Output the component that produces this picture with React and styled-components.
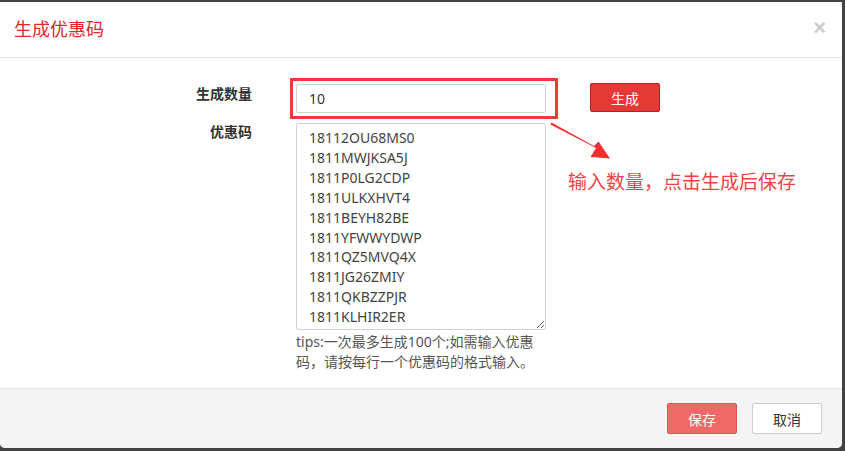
import React from "react";
import styled, { createGlobalStyle } from "styled-components";

const GlobalStyle = createGlobalStyle`
  html, body {
    margin: 0;
    padding: 0;
    background: #424242;
  }
  body {
    font-family: "Noto Sans", "Noto Sans CJK SC", sans-serif;
  }
  * { box-sizing: border-box; }
`;

const Modal = styled.div`
  margin-top: 2px;
  width: 842px;
  height: 446px;
  background: #fff;
  border-radius: 0 0 5px 5px;
  overflow: hidden;
  display: flex;
  flex-direction: column;
`;

const Header = styled.div`
  height: 56px;
  border-bottom: 1px solid #e5e5e5;
  display: flex;
  align-items: center;
  justify-content: space-between;
  padding: 0 14px 0 14px;
  flex-shrink: 0;
`;

const Title = styled.h4`
  margin: 0;
  font-size: 18px;
  font-weight: 400;
  color: #e8262b;
  line-height: 24px;
  padding-bottom: 1px;
`;

const Close = styled.button`
  border: 0;
  background: transparent;
  padding: 0;
  font-family: "Liberation Sans", sans-serif;
  font-size: 22px;
  font-weight: 700;
  line-height: 1;
  color: #000;
  opacity: 0.2;
  margin-right: 2px;
  margin-bottom: 3px;
  cursor: pointer;
`;

const Body = styled.div`
  position: relative;
  height: 330px;
  padding-top: 26px;
  flex-shrink: 0;
`;

const Form = styled.div`
  display: grid;
  grid-template-columns: 252px 250px auto;
  column-gap: 44px;
  row-gap: 10px;
  align-items: start;
`;

const Label = styled.label`
  text-align: right;
  font-size: 14px;
  font-weight: 700;
  color: #333;
  line-height: 20px;
  margin-top: ${(p) => p.$offset || 0}px;
`;

const Input = styled.input`
  width: 250px;
  height: 29px;
  border: 1px solid #d2d2d2;
  border-radius: 2px;
  padding: 0 12px;
  font-family: inherit;
  font-size: 14px;
  color: #333;
  outline: none;
`;

const GenerateButton = styled.button`
  width: 70px;
  height: 29px;
  margin-top: -1px;
  background: #e53935;
  border: 1px solid #b3201f;
  border-radius: 2px;
  color: #fff;
  font-family: inherit;
  font-size: 14px;
  padding: 0;
  justify-self: start;
`;

const Field = styled.div`
  display: flex;
  flex-direction: column;
`;

const CodeArea = styled.textarea`
  width: 250px;
  height: 207px;
  border: 1px solid #d2d2d2;
  border-radius: 2px;
  padding: 4px 12px 0;
  font-family: inherit;
  font-size: 14px;
  line-height: 19.9px;
  color: #444;
  overflow: hidden;
  outline: none;
  resize: vertical;
`;

const Tips = styled.p`
  margin: 2px 0 0;
  width: 250px;
  font-size: 14px;
  line-height: 20px;
  color: #555;
`;

/* red outline drawn around the quantity field */
const Highlight = styled.div`
  position: absolute;
  left: 290px;
  top: 20px;
  width: 268px;
  height: 41px;
  border: 3px solid #f03a3a;
  pointer-events: none;
`;

const Pointer = styled.svg`
  position: absolute;
  left: 545px;
  top: 60px;
  pointer-events: none;
`;

const Note = styled.div`
  position: absolute;
  left: 568px;
  top: 112px;
  font-size: 19px;
  line-height: 24px;
  color: #f04444;
  white-space: nowrap;
`;

const Footer = styled.div`
  flex: 1;
  border-top: 1px solid #e5e5e5;
  background: #f4f4f4;
  display: flex;
  justify-content: flex-end;
  align-items: center;
  gap: 15px;
  padding: 0 20px 0 0;
`;

const FooterButton = styled.button`
  width: 70px;
  height: 31px;
  border-radius: 2px;
  font-family: inherit;
  font-size: 14px;
  padding: 0;
  border: 1px solid ${(p) => (p.$primary ? "#e4524e" : "#cccccc")};
  background: ${(p) => (p.$primary ? "#ef6a66" : "#ffffff")};
  color: ${(p) => (p.$primary ? "#ffffff" : "#333333")};
`;

const codes = [
  "18112OU68MS0",
  "1811MWJKSA5J",
  "1811P0LG2CDP",
  "1811ULKXHVT4",
  "1811BEYH82BE",
  "1811YFWWYDWP",
  "1811QZ5MVQ4X",
  "1811JG26ZMIY",
  "1811QKBZZPJR",
  "1811KLHIR2ER",
];

export default function App() {
  return (
    <>
      <GlobalStyle />
      <Modal>
        <Header>
          <Title>生成优惠码</Title>
          <Close aria-label="close">×</Close>
        </Header>
        <Body>
          <Form>
            <Label>生成数量</Label>
            <Input defaultValue="10" />
            <GenerateButton>生成</GenerateButton>
            <Label $offset={-1}>优惠码</Label>
            <Field>
              <CodeArea defaultValue={codes.join("\n")} spellCheck={false} />
              <Tips>tips:一次最多生成100个;如需输入优惠码，请按每行一个优惠码的格式输入。</Tips>
            </Field>
          </Form>
          <Highlight />
          <Pointer width="70" height="45" viewBox="545 118 70 45">
            <polygon
              points="550.5,124.5 596,148 590.5,157 610,158.5 598.5,141.5 594,146 551.5,122.5"
              fill="#f03030"
            />
          </Pointer>
          <Note>输入数量，点击生成后保存</Note>
        </Body>
        <Footer>
          <FooterButton $primary>保存</FooterButton>
          <FooterButton>取消</FooterButton>
        </Footer>
      </Modal>
    </>
  );
}
